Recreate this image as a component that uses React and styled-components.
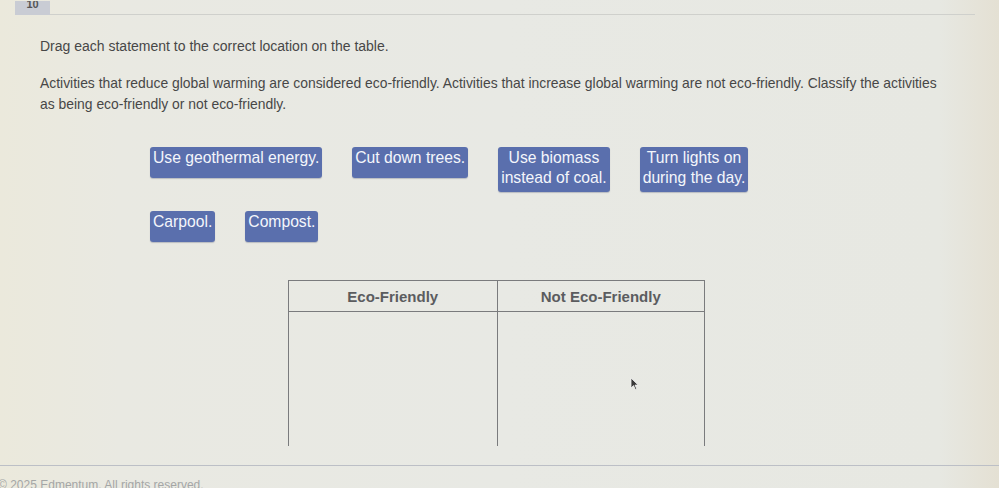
import React from "react";
import styled, { createGlobalStyle } from "styled-components";

const Global = createGlobalStyle`
  html, body { margin: 0; padding: 0; }
  body {
    width: 999px;
    height: 488px;
    overflow: hidden;
    background: linear-gradient(90deg, #ebe9dc 0%, #e9e9e2 12%, #e8e9e4 50%, #e7e8e2 94%, #e4e0d3 100%);
    font-family: "Liberation Sans", Arial, sans-serif;
  }
`;

const Page = styled.div`
  position: relative;
  width: 999px;
  height: 488px;
  display: flex;
  flex-direction: column;
`;

const TopBar = styled.div`
  display: flex;
  align-items: flex-end;
  height: 15px;
  padding-left: 15px;
  padding-right: 24px;
`;

const QuestionTab = styled.div`
  width: 35px;
  height: 14px;
  background: #c9ccd4;
  color: #555;
  font-size: 11px;
  font-weight: bold;
  line-height: 6px;
  text-align: center;
  overflow: hidden;
`;

const TopRule = styled.div`
  flex: 1;
  height: 1px;
  background: #cfd0cc;
`;

const Content = styled.div`
  padding: 21px 0 0 40px;
  color: #474747;
`;

const Prompt = styled.p`
  margin: 0;
  font-size: 14px;
  line-height: 20px;
`;

const Description = styled.p`
  margin: 17px 0 0;
  font-size: 13.9px;
  line-height: 21px;
  width: 905px;
`;

const Tiles = styled.div`
  margin: 32px 0 0 110px;
  display: flex;
  flex-direction: column;
  gap: 19px;
`;

const TileRow = styled.div`
  display: flex;
  align-items: flex-start;
  gap: 30px;
`;

const Tile = styled.div`
  box-sizing: border-box;
  min-height: 31px;
  padding: 1px 3px 4px;
  background: #5a6fad;
  border-radius: 3px;
  color: #f4f6fb;
  font-size: 15.7px;
  line-height: 20px;
  text-align: center;
  box-shadow: 0 1px 1px rgba(40, 50, 90, 0.25);
`;

const TableWrap = styled.div`
  margin: 38px 0 0 248px;
  width: 415px;
  display: grid;
  grid-template-columns: 1fr 1fr;
  grid-template-rows: 31px 134px;
  border-top: 1.5px solid #7a7b7d;
  border-left: 1.5px solid #7a7b7d;
  border-right: 1.5px solid #7a7b7d;
`;

const HeadCell = styled.div`
  display: flex;
  align-items: center;
  justify-content: center;
  font-size: 15px;
  font-weight: bold;
  color: #5b5c5f;
  border-bottom: 1.5px solid #7a7b7d;
  border-left: ${(p) => (p.$divided ? "1.5px solid #7a7b7d" : "none")};
`;

const DropCell = styled.div`
  border-left: ${(p) => (p.$divided ? "1.5px solid #7a7b7d" : "none")};
`;

const Footer = styled.div`
  margin-top: auto;
  border-top: 1.5px solid #bcbfc6;
  height: 22px;
  overflow: hidden;
`;

const Copyright = styled.span`
  display: block;
  margin: 12px 0 0 -2px;
  font-size: 12px;
  color: #a4a6a6;
`;

const Pointer = styled.svg`
  position: absolute;
  left: 630px;
  top: 377px;
`;

export default function App() {
  return (
    <>
      <Global />
      <Page>
        <TopBar>
          <QuestionTab>10</QuestionTab>
          <TopRule />
        </TopBar>
        <Content>
          <Prompt>Drag each statement to the correct location on the table.</Prompt>
          <Description>
            Activities that reduce global warming are considered eco-friendly. Activities that increase global
            warming are not eco-friendly. Classify the activities as being eco-friendly or not eco-friendly.
          </Description>
          <Tiles>
            <TileRow>
              <Tile>Use geothermal energy.</Tile>
              <Tile>Cut down trees.</Tile>
              <Tile>
                Use biomass
                <br />
                instead of coal.
              </Tile>
              <Tile>
                Turn lights on
                <br />
                during the day.
              </Tile>
            </TileRow>
            <TileRow>
              <Tile>Carpool.</Tile>
              <Tile>Compost.</Tile>
            </TileRow>
          </Tiles>
          <TableWrap>
            <HeadCell>Eco-Friendly</HeadCell>
            <HeadCell $divided>Not Eco-Friendly</HeadCell>
            <DropCell />
            <DropCell $divided />
          </TableWrap>
        </Content>
        <Footer>
          <Copyright>© 2025 Edmentum. All rights reserved.</Copyright>
        </Footer>
        <Pointer width="9" height="14" viewBox="0 0 9 14">
          <path d="M1 1 L1 11 L3.5 8.6 L5.4 12.6 L6.8 12 L5 8.1 L8.2 8.1 Z" fill="#3a3a3a" stroke="#f2f2f2" strokeWidth="0.8" />
        </Pointer>
      </Page>
    </>
  );
}
